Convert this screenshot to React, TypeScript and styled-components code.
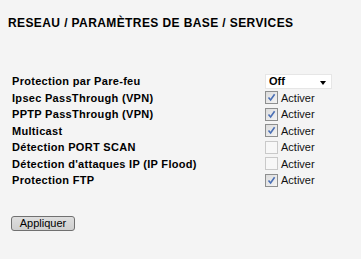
import {Fragment} from "react";
import styled, {createGlobalStyle} from "styled-components";

const GlobalStyle = createGlobalStyle`
    html, body {
        margin: 0;
        padding: 0;
        background: #f4f4f4;
    }
    body {
        font-family: "Liberation Sans", Arial, sans-serif;
        color: #000;
    }
`;

const Page = styled.div`
    width: 361px;
    height: 259px;
    padding: 16px 0 0 8px;
    box-sizing: border-box;
`;

const Title = styled.h1`
    margin: 0;
    font-size: 12px;
    font-weight: bold;
    line-height: 15px;
    letter-spacing: 0.4px;
`;

const Form = styled.div`
    display: grid;
    grid-template-columns: 253px 80px;
    grid-auto-rows: 16.5px;
    align-items: center;
    margin: 42px 0 0 4px;
`;

const Label = styled.div`
    font-size: 11px;
    font-weight: bold;
    line-height: 14px;
    letter-spacing: 0.3px;
    white-space: nowrap;
`;

const Select = styled.div`
    display: flex;
    align-items: center;
    justify-content: space-between;
    width: 67px;
    height: 15px;
    box-sizing: border-box;
    padding: 0 5px 0 3px;
    background: #fff;
    border: 1px solid #e6e6e6;
    font-size: 11px;
    font-weight: bold;
`;

const Arrow = styled.span`
    width: 0;
    height: 0;
    margin-top: 3px;
    border-left: 3.5px solid transparent;
    border-right: 3.5px solid transparent;
    border-top: 4px solid #000;
`;

const CheckRow = styled.label`
    display: flex;
    align-items: center;
    gap: 3px;
    font-size: 11px;
    line-height: 14px;
    color: #111;
`;

const Box = styled.span<{ $checked: boolean }>`
    display: flex;
    align-items: center;
    justify-content: center;
    width: 13px;
    height: 13px;
    box-sizing: border-box;
    border: 1px solid ${props => (props.$checked ? '#8e8f8f' : '#c9c9c9')};
    background: ${props => (props.$checked ? 'linear-gradient(135deg, #dcdcdc, #f4f4f4)' : '#f7f7f7')};
`;

const Button = styled.button`
    display: block;
    margin: 27px 0 0 3px;
    width: 64px;
    height: 15px;
    padding: 0;
    box-sizing: border-box;
    border: 1px solid #707070;
    border-radius: 3px;
    background: linear-gradient(#dedede, #cfcfcf);
    font-family: "Liberation Sans", Arial, sans-serif;
    font-size: 11px;
    line-height: 12px;
    color: #000;
`;

const rows = [
    {label: "Ipsec PassThrough (VPN)", checked: true},
    {label: "PPTP PassThrough (VPN)", checked: true},
    {label: "Multicast", checked: true},
    {label: "Détection PORT SCAN", checked: false},
    {label: "Détection d'attaques IP (IP Flood)", checked: false},
    {label: "Protection FTP", checked: true},
];

function Check({checked}: { checked: boolean }) {
    return (
        <Box $checked={checked}>
            {checked && (
                <svg width="9" height="9" viewBox="0 0 9 9">
                    <path d="M1.5 4.5 L3.6 7 L7.6 1.2" stroke="#4a6fb5" strokeWidth="1.6" fill="none"/>
                </svg>
            )}
        </Box>
    );
}

export default function App() {
    return (
        <Page>
            <GlobalStyle/>
            <Title>RESEAU / PARAMÈTRES DE BASE / SERVICES</Title>
            <Form>
                <Label>Protection par Pare-feu</Label>
                <Select>Off<Arrow/></Select>
                {rows.map(row => (
                    <Fragment key={row.label}>
                        <Label>{row.label}</Label>
                        <CheckRow>
                            <Check checked={row.checked}/>
                            Activer
                        </CheckRow>
                    </Fragment>
                ))}
            </Form>
            <Button>Appliquer</Button>
        </Page>
    );
}
